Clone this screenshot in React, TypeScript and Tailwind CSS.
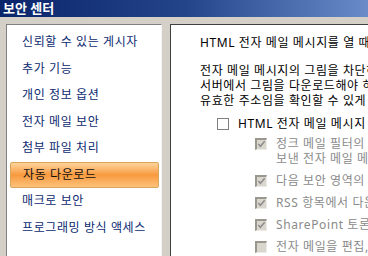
import React from 'react'

const menu = [
  '신뢰할 수 있는 게시자',
  '추가 기능',
  '개인 정보 옵션',
  '전자 메일 보안',
  '첨부 파일 처리',
  '자동 다운로드',
  '매크로 보안',
  '프로그래밍 방식 액세스',
]

function Check({ disabled, checked }: { disabled?: boolean; checked?: boolean }) {
  if (!disabled) {
    return <span className="block w-[12px] h-[12px] bg-white border border-[#808080] shrink-0" />
  }
  return (
    <span className="block w-[12px] h-[12px] bg-[#d9d6ce] border-t-2 border-l-2 border-[#9a978f] border-r border-b border-r-[#ecebe6] border-b-[#ecebe6] shrink-0 relative">
      {checked && (
        <svg viewBox="0 0 10 10" className="absolute left-[0px] top-[0px] w-[9px] h-[9px]">
          <path d="M1.5 4.5 L3.8 7 L8.5 1.5" fill="none" stroke="#8c8c8c" strokeWidth="1.7" />
        </svg>
      )}
    </span>
  )
}

function SubItem({ lines, checked = true }: { lines: string[]; checked?: boolean }) {
  return (
    <div className="flex items-start gap-[9px] pl-[55px]">
      <div className="pt-[2px]">
        <Check disabled checked={checked} />
      </div>
      <div className="text-[#8a8a8a] leading-[15px] whitespace-nowrap">
        {lines.map((l) => (
          <div key={l}>{l}</div>
        ))}
      </div>
    </div>
  )
}

export default function App() {
  return (
    <div
      className="w-[368px] h-[256px] overflow-hidden bg-[#d4d0c8] flex flex-col text-[12px]"
      style={{ fontFamily: '"Noto Sans", "Noto Sans CJK KR", sans-serif' }}
    >
      {/* Title */}
      <div className="h-[17px] shrink-0 bg-gradient-to-r from-[#0a246a] via-[#24448a] to-[#6a8bc8] flex items-center pl-[3px]">
        <span className="text-white font-bold text-[13px] leading-none">보안 센터</span>
      </div>

      <div className="flex flex-1 pt-[7px] pl-[6px] gap-[8px] min-h-0 tracking-[0.6px]">
        {/* Left menu */}
        <div className="w-[156px] shrink-0 bg-white border-t border-l border-[#808080] border-r border-r-[#f4f3ef] pt-[4px] pl-[3px] pr-[2px]">
          {menu.map((m) =>
            m === '자동 다운로드' ? (
              <div
                key={m}
                className="h-[26px] flex items-center pl-[12px] rounded-[2px] border border-[#d9a55a] bg-gradient-to-b from-[#fdd49a] via-[#f89a3c] to-[#fcc27a] text-[#101010] my-[0.25px]"
              >
                {m}
              </div>
            ) : (
              <div key={m} className="h-[26.5px] flex items-center pl-[12px] text-[#0c2a70] whitespace-nowrap">
                {m}
              </div>
            )
          )}
        </div>

        {/* Right panel */}
        <div className="flex-1 bg-white border-t border-l border-[#404040] pl-[29px] pt-[10px] overflow-hidden">
          <div className="whitespace-nowrap text-black leading-[16px]">
            HTML 전자 메일 메시지를 열 때 Outlook에서 그림을 자동으로 다운로드할지 여부를 설정할 수 있습니다.
          </div>
          <div className="mt-[12px] whitespace-nowrap text-black leading-[15px]">
            <div>전자 메일 메시지의 그림을 차단하면 개인 정보를 보호할 수 있습니다.</div>
            <div>서버에서 그림을 다운로드해야 하므로 스팸 발송자에게</div>
            <div>유효한 주소임을 확인할 수 있게 합니다.</div>
          </div>
          <div className="mt-[8px] flex items-center gap-[9px] pl-[17px] whitespace-nowrap leading-[15px]">
            <Check />
            <span className="text-black">HTML 전자 메일 메시지 또는 RSS 항목에서 그림 자동 다운로드 안 함</span>
          </div>
          <div className="mt-[5px] flex flex-col gap-[7px]">
            <SubItem
              lines={[
                '정크 메일 필터의 수신 허용 - 보낸 사람 목록에 정의된 보낸 사람이',
                '보낸 전자 메일 메시지에서 다운로드 허용',
              ]}
            />
            <SubItem lines={['다음 보안 영역의 웹 사이트에서 다운로드 허용: 신뢰할 수 있는 영역']} />
            <SubItem lines={['RSS 항목에서 다운로드 허용']} />
            <SubItem lines={['SharePoint 토론 게시판에서 다운로드 허용']} />
            <SubItem lines={['전자 메일을 편집, 전달 또는 회신할 때 경고']} checked={false} />
          </div>
        </div>
      </div>
    </div>
  )
}
